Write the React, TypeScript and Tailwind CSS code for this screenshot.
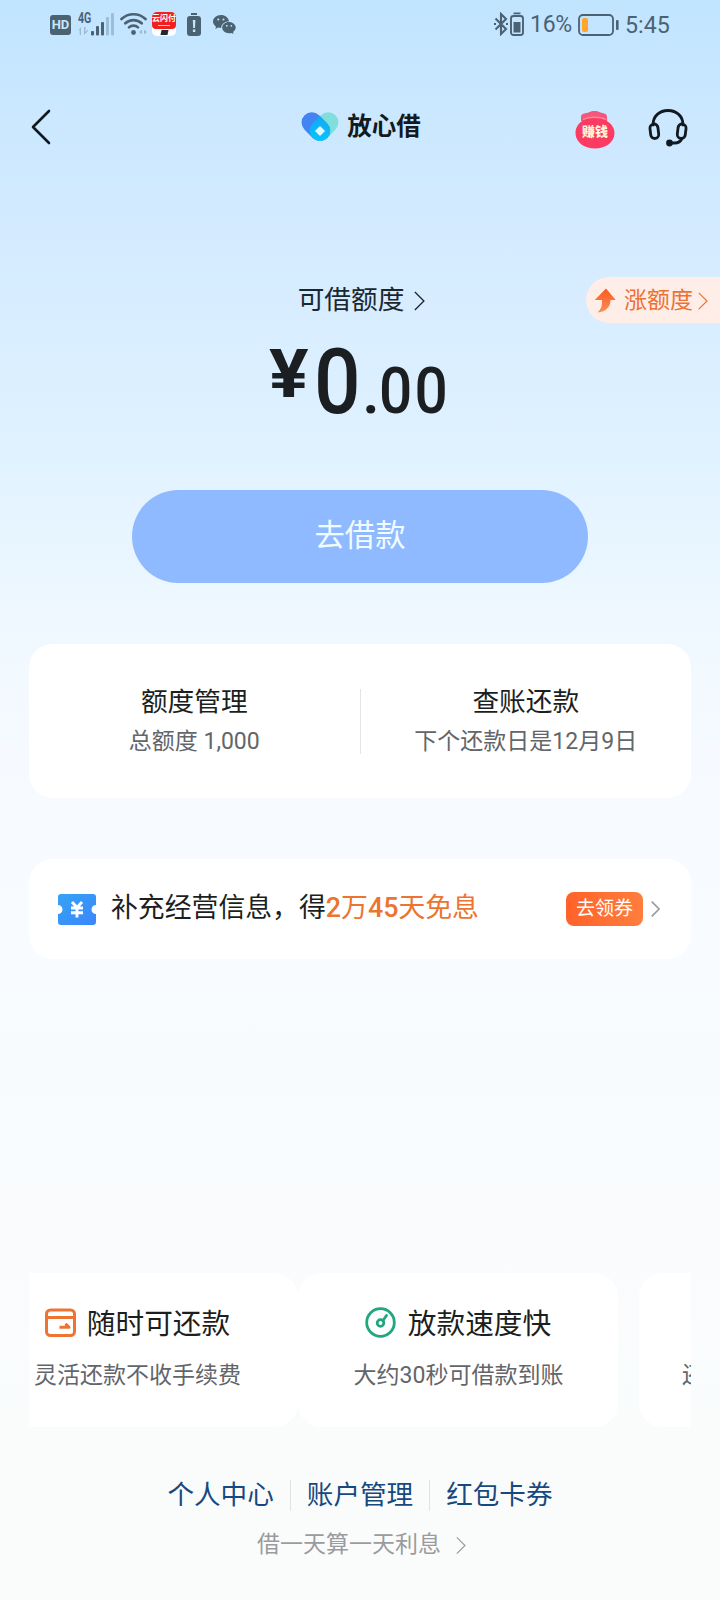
import clsx from "clsx";

interface ChevronProps {
  className: string;
  strokeWidth?: number;
}

interface Feature {
  title: string;
  description: string;
  icon: JSX.Element | null;
}

const Chevron = ({ className, strokeWidth = 1.5 }: ChevronProps): JSX.Element => (
  <svg
    className={clsx("shrink-0", className)}
    viewBox="0 0 10 18"
    fill="none"
    stroke="currentColor"
    strokeWidth={strokeWidth}
  >
    <path d="M0.8 0.8 9 9 0.8 17.2" />
  </svg>
);

const StatusBar = (): JSX.Element => (
  <div className="flex h-12 items-center justify-between pl-[50px] pr-[50px] text-[#4b6272]">
    <div className="flex items-center">
      <div className="mt-px flex h-5 w-[21px] items-center justify-center rounded-[3px] bg-[#4b6272] text-[13px] font-bold leading-none text-[#c5e6ff]">
        HD
      </div>
      <div className="ml-[7px] flex h-6 w-9 items-end">
        <div className="flex h-full w-[13px] flex-col justify-between">
          <span className="origin-left scale-x-[0.76] text-[14px] font-bold leading-[12px]">4G</span>
          <svg className="mb-px h-2 w-[11px]" viewBox="0 0 11 8" fill="#9dbace">
            <path d="M3 0v8H1.700V3L0 4zM6 0v8l4-4V2.500L7.500 5V0z" />
          </svg>
        </div>
        <svg className="h-[23px] w-[23px]" viewBox="0 0 23 23">
          <g fill="#4b6272">
            <rect x="0" y="18" width="3" height="4.500" rx="1" />
            <rect x="5" y="13" width="3" height="9.500" rx="1" />
            <rect x="10" y="9" width="3" height="13.500" rx="1" />
          </g>
          <g fill="#9dbfd6">
            <rect x="15" y="4" width="3" height="18.500" rx="1" />
            <rect x="20" y="0" width="3" height="22.500" rx="1" />
          </g>
        </svg>
      </div>
      <svg className="ml-[6px] h-6 w-7" viewBox="0 0 28 24">
        <g fill="none" stroke="#4b6272" strokeWidth="2.700" strokeLinecap="round">
          <path d="M1.500 7a17.500 17.500 0 0 1 24 0" />
          <path d="M5.300 11.300a12 12 0 0 1 16.400 0" />
          <path d="M9 15.400a6.500 6.500 0 0 1 9 0" />
        </g>
        <circle cx="13.500" cy="20.500" r="2.400" fill="#4b6272" />
        <path d="M22 17.500v5l-3-2.500zM24 17.500v5l3-2.500z" fill="#9dbace" />
      </svg>
      <div className="ml-1 flex h-6 w-6 flex-col items-center overflow-hidden rounded-[5px] bg-white">
        <div className="flex h-[17px] w-full flex-col items-center rounded-b-[4px] bg-[#ee2120] font-bold text-white">
          <span className="whitespace-nowrap text-[8px] leading-[13px]">云闪付</span>
          <span className="h-px w-3 bg-[#ffc4c0]" />
        </div>
        <div className="mt-px h-[5px] w-[7px] -skew-x-12 bg-[#222a30]" />
      </div>
      <svg className="ml-[11px] h-[23px] w-[14px]" viewBox="0 0 14 23">
        <path d="M4 0h6v2H4z" fill="#4b6272" />
        <rect y="3" width="14" height="20" rx="3" fill="#4b6272" />
        <path d="M5.800 7h2.600l-.4 8H6.200zM5.900 16.500h2.400v2.500H5.900z" fill="#c5e6ff" />
      </svg>
      <svg className="ml-3 h-[19px] w-[23px]" viewBox="0 0 23 19">
        <path
          d="M8 0C3.500 0 0 3 0 6.600c0 2 1.200 3.900 3 5.100L2.300 14l2.800-1.400c.9.300 1.900.4 2.900.4.5-4.200 4-6.800 8-6.600C15.500 2.700 12 0 8 0z"
          fill="#4b6272"
        />
        <path
          d="M16 7c-3.900 0-6.800 2.500-6.800 5.600 0 3.200 3 5.700 6.800 5.700.8 0 1.600-.1 2.300-.3l2.300 1-.6-2c1.600-1 2.700-2.600 2.700-4.400C22.700 9.500 19.700 7 16 7z"
          fill="#4b6272"
        />
        <g fill="#c5e6ff">
          <circle cx="5.300" cy="4.500" r="1" />
          <circle cx="10.500" cy="4.500" r="1" />
          <circle cx="13.800" cy="10.800" r=".9" />
          <circle cx="18.300" cy="10.800" r=".9" />
        </g>
      </svg>
    </div>

    <div className="flex items-center">
      <svg className="h-6 w-[14px]" viewBox="0 0 14 24" fill="none" stroke="#4b6272" strokeWidth="2.100">
        <path d="M1.500 6.500 12 17l-5 5V2l5 5L1.500 17.500" />
        <path d="M0 12h2M12 12h2" />
      </svg>
      <svg className="ml-[2px] h-6 w-[14px]" viewBox="0 0 14 24">
        <path d="M3.500.5h7v1.800h-7z" fill="#4b6272" />
        <rect x="1" y="4" width="12" height="19" rx="2.500" fill="none" stroke="#4b6272" strokeWidth="1.900" />
        <path d="M3.500 10h7v10.500h-7z" fill="#4b6272" />
      </svg>
      <span className="ml-[6px] mt-[2px] w-[43px] text-[23px] leading-6 tracking-[-0.3px]">16%</span>
      <svg className="ml-[5px] mt-px h-[22px] w-[41px]" viewBox="0 0 41 22">
        <rect x="1" y="1" width="34" height="20" rx="4" fill="none" stroke="#4b6272" strokeWidth="1.800" />
        <rect x="4" y="4" width="6" height="14" rx="2" fill="#ffa62b" />
        <rect x="38" y="6" width="2.600" height="10" rx="1" fill="#4b6272" />
      </svg>
      <span className="ml-[6px] mt-[2px] w-[45px] text-[23.200px] leading-6">5:45</span>
    </div>
  </div>
);

const Header = (): JSX.Element => (
  <header className="mt-[55px] grid h-12 grid-cols-[1fr_auto_1fr] items-center pl-[31px] pr-8">
    <svg
      className="-mt-px h-9 w-[20px]"
      viewBox="0 0 20 36"
      fill="none"
      stroke="#121a20"
      strokeWidth="2.600"
      strokeLinecap="round"
      strokeLinejoin="round"
    >
      <path d="M18 2 2 18l16 16" />
    </svg>
    <div className="flex items-center pl-[3px]">
      <svg className="-mt-px h-[30px] w-[38px]" viewBox="0 0 38 30">
        <defs>
          <linearGradient id="heart" x1="0" y1="0" x2="0" y2="1">
            <stop offset="0" stopColor="#12a9f5" />
            <stop offset="1" stopColor="#06c4fa" />
          </linearGradient>
        </defs>
        <g fill="none" strokeWidth="20.500" strokeLinecap="round">
          <path d="M27.200 10.500 19 18.700" stroke="#7fdfdc" />
          <path d="M10.800 10.500 19 18.700" stroke="#4284f2" />
        </g>
        <path d="M19 4.200 26.250 11.450A10.250 10.250 0 1 1 11.750 11.450Z" fill="url(#heart)" />
        <path d="M19 14.500l4.500 4.500L19 23.500l-4.500-4.500z" fill="#e4f8ff" stroke="#e4f8ff" strokeLinejoin="round" />
      </svg>
      <span className="ml-[8px] text-[24.500px] font-bold leading-8 text-[#121a20]">放心借</span>
    </div>
    <div className="flex items-center justify-end">
      <div className="relative mt-[5px] h-[38px] w-10">
        <svg className="h-full w-full" viewBox="0 0 40 38">
          <path d="M6 6C6 2 11 2.500 14 1.200c3-1.600 8-1.600 11 0C28 2.500 32 2 32 6v4H6z" fill="#f4567c" />
          <path d="M8 9.500c6-4 16-4 23 0 5.500 3 8.500 7.500 8.500 12.500C39.500 31 31 37.500 20 37.500S.5 31 .5 22C.5 17 3 12.500 8 9.500z" fill="#fb3b62" />
          <path d="M8 8.500c6-3 17-3 23 0" fill="none" stroke="#ff8a9d" strokeWidth="1.300" />
        </svg>
        <span className="absolute inset-x-0 top-[13px] text-center text-[13px] font-black leading-4 text-[#fff3d8]">
          赚钱
        </span>
      </div>
      <svg
        className="ml-[33px] h-[39px] w-10"
        viewBox="0 0 40 39"
        fill="none"
        stroke="#121a20"
        strokeWidth="2.800"
        strokeLinecap="round"
      >
        <path d="M5 17C5 8 11.500 2.500 20 2.500S35 8 35 17" />
        <rect x="2.300" y="16" width="8" height="14.500" rx="4" transform="rotate(-7 6.300 23)" />
        <rect x="29.700" y="16" width="8" height="14.500" rx="4" transform="rotate(7 33.700 23)" />
        <path d="M34 30.500c-1.500 3-4 4.500-7 4.500h-4" />
        <circle cx="21.500" cy="35" r="2" fill="#121a20" />
      </svg>
    </div>
  </header>
);

const Balance = (): JSX.Element => (
  <section className="mt-[126px] flex flex-col">
    <div className="grid h-[46px] grid-cols-[1fr_auto_1fr] items-center">
      <span />
      <div className="flex items-center pl-[3px] text-[#1b2730]">
        <span className="text-[26.700px] leading-[46px]">可借额度</span>
        <Chevron className="ml-[10px] mt-px h-5 w-[11px]" strokeWidth={1.2} />
      </div>
      <div className="flex h-[46px] w-[134px] items-center justify-self-end rounded-l-full bg-[#ffede7] pl-2 text-[#ee7134]">
        <svg className="h-[25px] w-[22px]" viewBox="0 0 22 25">
          <defs>
            <linearGradient id="raise" x1="0" y1="0" x2="0" y2="1">
              <stop offset="0" stopColor="#fb5a1e" />
              <stop offset="1" stopColor="#fb8e5c" />
            </linearGradient>
          </defs>
          <path d="M12 .5 21.700 12H16.500c.3 6-4.500 12-13 12.500C7 21.500 8.500 17.500 8 12H.8z" fill="url(#raise)" />
        </svg>
        <span className="ml-2 pt-px text-[23px] leading-[44px]">涨额度</span>
        <Chevron className="ml-[5px] mt-px h-[18px] w-[10px]" strokeWidth={1.2} />
      </div>
    </div>
    <div className="mt-[14px] flex h-[91px] items-baseline justify-center pr-[3px] text-[#1c1f21]">
      <span className="w-[46px] origin-left translate-x-px -translate-y-[16px] scale-x-[1.12] text-[66px] font-bold leading-[90px]">¥</span>
      <span className="w-[48px] origin-left scale-x-[0.9] text-[91px] font-medium leading-[90px]">0</span>
      <span className="w-[17px] text-[65px] font-medium leading-[90px]">.</span>
      <span className="w-[70px] origin-left scale-x-90 text-[65px] font-medium leading-[90px] tracking-[2.500px]">00</span>
    </div>
    <button className="mt-[62px] h-[93px] w-[456px] self-center rounded-full bg-[#90baff] pb-[2px] text-[30.300px] text-[#f0fcff]">
      去借款
    </button>
  </section>
);

const AccountCard = (): JSX.Element => (
  <section className="mx-[29px] mt-[61px] flex h-[154px] items-center rounded-3xl bg-white text-center">
    <div className="flex-1 pt-[3px]">
      <p className="text-[26.700px] leading-[39px] text-[#1c1f21]">额度管理</p>
      <p className="text-[23px] leading-10 text-[#62666a]">总额度 1,000</p>
    </div>
    <div className="h-[65px] w-px bg-[#e2e4e6]" />
    <div className="flex-1 pt-[3px]">
      <p className="text-[26.700px] leading-[39px] text-[#1c1f21]">查账还款</p>
      <p className="text-[23px] leading-10 text-[#62666a]">下个还款日是12月9日</p>
    </div>
  </section>
);

const CouponBanner = (): JSX.Element => (
  <section className="mx-[29px] mt-[61px] flex h-[100px] items-center rounded-3xl bg-white pl-[29px] pr-[31px]">
    <svg className="mt-px h-[31px] w-[38px]" viewBox="0 0 38 31">
      <defs>
        <linearGradient id="ticket" x1="0" y1="0" x2="1" y2="1">
          <stop offset="0" stopColor="#35a3f6" />
          <stop offset="1" stopColor="#3b86fb" />
        </linearGradient>
      </defs>
      <path
        d="M3 0h32a3 3 0 0 1 3 3v8a4.500 4.500 0 0 0 0 9v8a3 3 0 0 1-3 3H3a3 3 0 0 1-3-3v-8a4.500 4.500 0 0 0 0-9V3a3 3 0 0 1 3-3z"
        fill="url(#ticket)"
      />
      <path
        d="M14 8l5 5.500L24 8M19 14V23.500M13 14h12M13 18.700h12"
        fill="none"
        stroke="#fff"
        strokeWidth="2.900"
      />
    </svg>
    <p className="-mt-[2px] ml-[15px] whitespace-nowrap text-[26.850px] leading-10 text-[#1c1f21]">
      补充经营信息，得
      <span className="text-[#ec7431]">
        <b className="font-medium">2</b>万<b className="font-medium">45</b>天免息
      </span>
    </p>
    <span className="ml-auto h-[34px] w-[77px] rounded-lg bg-linear-to-r from-[#ff6228] to-[#ff7d3e] text-center text-[19px] leading-[34px] text-white">
      去领券
    </span>
    <Chevron className="ml-2 h-4 w-[9px] text-[#999da1]" strokeWidth={1.9} />
  </section>
);

const CardIcon = (): JSX.Element => (
  <svg className="h-[30px] w-[31px]" viewBox="0 0 31 30" fill="none" stroke="#ee7434" strokeWidth="3">
    <rect x="1.500" y="2" width="28" height="25.500" rx="4" />
    <path d="M1.500 9.500h28" />
    <path d="M14.500 19.300h9.500l-3.500-3.500" strokeLinejoin="round" />
  </svg>
);

const SpeedIcon = (): JSX.Element => (
  <svg className="-ml-px -mt-[2px] mr-px h-[31px] w-[31px]" viewBox="0 0 31 31" fill="none" stroke="#22a680" strokeWidth="2.800">
    <circle cx="15.500" cy="15.500" r="13.800" />
    <circle cx="15.500" cy="16" r="3.300" />
    <path d="M18 13.500l3.500-5" strokeLinecap="round" />
  </svg>
);

const features: Feature[] = [
  { title: "随时可还款", description: "灵活还款不收手续费", icon: <CardIcon /> },
  { title: "放款速度快", description: "大约30秒可借款到账", icon: <SpeedIcon /> },
  { title: "", description: "还款方式多样灵活选择", icon: null },
];

const FeatureStrip = (): JSX.Element => (
  <section className="mx-[29px] mt-[314px] flex h-[154px] overflow-hidden">
    {features.map((feature, index) => (
      <div
        key={feature.description}
        className={clsx(
          "flex h-full w-80 shrink-0 flex-col items-center rounded-3xl bg-white pt-[30px]",
          index === 0 && "-ml-[51px] pr-px",
          index === 1 && "pl-px",
          index === 2 && "ml-[21px] pr-1"
        )}
      >
        <div className="flex h-10 items-center">
          {feature.icon}
          <span className="ml-[11px] pt-px text-[28.700px] leading-10 text-[#1c1f21]">{feature.title}</span>
        </div>
        <p className="mt-[13px] text-[23px] leading-10 text-[#62666a]">{feature.description}</p>
      </div>
    ))}
  </section>
);

const links: string[] = ["个人中心", "账户管理", "红包卡券"];

const Footer = (): JSX.Element => (
  <footer className="mt-[48px] flex flex-col items-center">
    <nav className="flex items-center">
      {links.map((link, index) => (
        <div key={link} className="flex items-center">
          {index > 0 && <div className="mx-4 h-[31px] w-px bg-[#e0e3e6]" />}
          <a className="text-[26.600px] leading-10 text-[#17497f]">{link}</a>
        </div>
      ))}
    </nav>
    <div className="mt-[10px] flex items-center pl-[3px] text-[#9a9b9d]">
      <span className="text-[23px] leading-10">借一天算一天利息</span>
      <Chevron className="ml-[15px] h-[19px] w-[10px]" strokeWidth={1.2} />
    </div>
  </footer>
);

const App = (): JSX.Element => (
  <main className="h-[1600px] w-[720px] overflow-hidden bg-[linear-gradient(180deg,#c1e4ff_0px,#cbe8ff_120px,#d5ebff_250px,#dcf0ff_400px,#ecf7ff_590px,#f2f9ff_670px,#f7faff_800px,#f8fbff_960px,#fafcfc_1440px,#fafcfc_1600px)] font-[Roboto,'Noto_Sans_CJK_SC',sans-serif]">
    <StatusBar />
    <Header />
    <Balance />
    <AccountCard />
    <CouponBanner />
    <FeatureStrip />
    <Footer />
  </main>
);

export default App;
